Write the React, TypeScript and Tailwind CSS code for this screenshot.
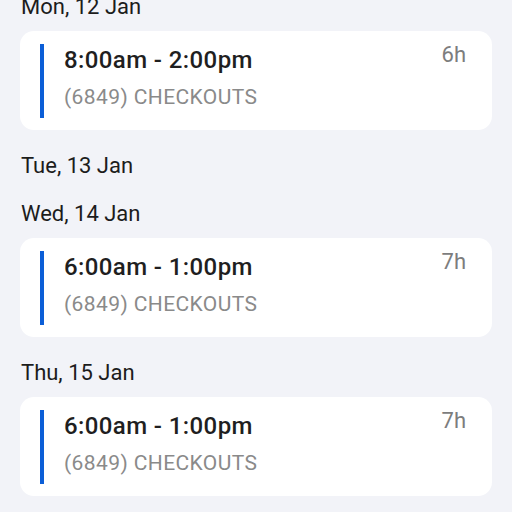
const days = [
  { label: 'Mon, 12 Jan', shift: { time: '8:00am - 2:00pm', store: '(6849) CHECKOUTS', hours: '6h' } },
  { label: 'Tue, 13 Jan' },
  { label: 'Wed, 14 Jan', shift: { time: '6:00am - 1:00pm', store: '(6849) CHECKOUTS', hours: '7h' } },
  { label: 'Thu, 15 Jan', shift: { time: '6:00am - 1:00pm', store: '(6849) CHECKOUTS', hours: '7h' } },
]

type Shift = { time: string; store: string; hours: string }

function ShiftCard({ shift }: { shift: Shift }) {
  return (
    <div className="flex items-start rounded-[14px] bg-white pl-5 pr-[26px] pt-[13px] pb-[12px]">
      <div className="h-[74px] w-1 bg-[#0b5ed7]" />
      <div className="ml-5 flex flex-1 flex-col">
        <div className="text-[24px] leading-[32px] font-medium tracking-[0.4px] text-[#1f1f1f]">{shift.time}</div>
        <div className="mt-2 text-[21px] leading-[26px] tracking-[0.4px] text-[#8a8a8a]">{shift.store}</div>
      </div>
      <div className="-mt-px text-[22px] leading-6 text-[#7d7d7d]">{shift.hours}</div>
    </div>
  )
}

export default function App() {
  return (
    <div className="h-[512px] overflow-hidden bg-[#f2f3f8] px-5 font-['Roboto',sans-serif]">
      <div className="-mt-[7px] flex flex-col gap-[22px]">
        {days.map((d) => (
          <div key={d.label} className="flex flex-col gap-3">
            <div className="mt-[2px] pl-px text-[22px] leading-6 text-[#1c1c1c]">{d.label}</div>
            {d.shift && <ShiftCard shift={d.shift} />}
          </div>
        ))}
      </div>
    </div>
  )
}
